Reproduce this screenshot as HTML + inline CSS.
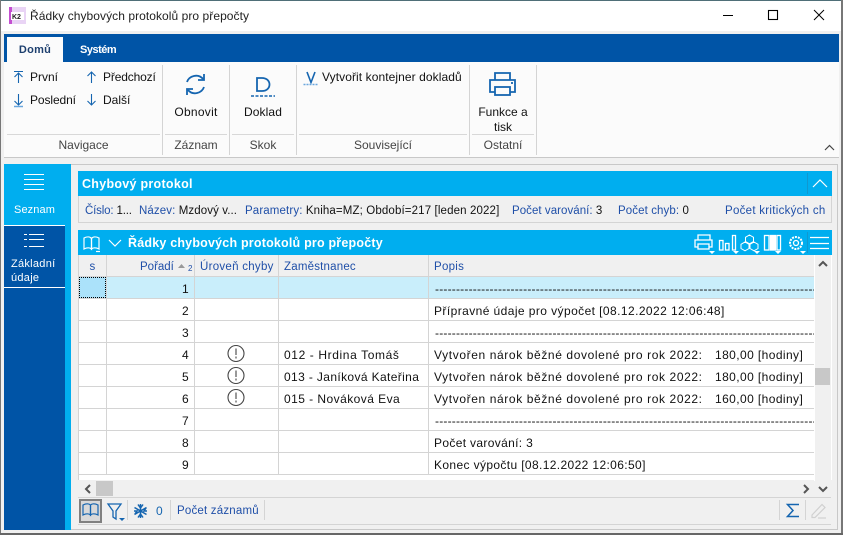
<!DOCTYPE html>
<html><head><meta charset="utf-8"><style>
html,body{margin:0;padding:0}
body{width:843px;height:535px;overflow:hidden;position:relative;background:#f0f0f0;font-family:"Liberation Sans",sans-serif;font-size:12px;letter-spacing:.28px;color:#111}
div,span.a{position:absolute}
.t{position:absolute;white-space:nowrap;line-height:16px}
.b{color:#1f4fa8}
.g{color:#444;letter-spacing:0}
.w{color:#fff}
.c{text-align:center}
.wb{color:#fff;font-weight:bold;font-size:12.5px}
svg{position:absolute;overflow:visible}
.sep{background:#d4d4d4;width:1px;top:65px;height:90px}
.gl{background:#d8d8d8;height:1px;top:134px}
.row{left:79px;width:735px;height:21px;background:#fff;border-bottom:1px solid #d4d4d4}
.v{background:#d4d4d4;width:1px}
.r{text-align:right;left:107px;width:82px}
.dash{left:435px;width:379px;overflow:hidden;letter-spacing:.2px}
.i{font-size:11.500px}
.n{letter-spacing:.61px}
.h{letter-spacing:.41px}
</style></head><body>
<div style="left:0;top:0;width:843px;height:1px;background:#4f6f78"></div>
<div style="left:0;top:0;width:1px;height:535px;background:#777"></div>
<div style="left:841px;top:0;width:2px;height:535px;background:#777"></div>
<div style="left:0;top:533px;width:843px;height:2px;background:#666"></div>
<div style="left:1px;top:1px;width:840px;height:30px;background:#fff"></div>
<svg style="left:9px;top:7px" width="17" height="17" viewBox="0 0 17 17"><rect width="17" height="17" fill="#e9d4f5"/><rect x="0" y="0" width="3" height="17" fill="#c44fd0"/><rect x="2" y="5" width="13" height="8" fill="#fff"/><text x="3" y="12" font-size="7" font-weight="bold" font-family="Liberation Sans" fill="#222" letter-spacing="0">K2</text></svg>
<span class="t" style="left:30px;top:8px;font-size:12px;letter-spacing:.06px;color:#222">Řádky chybových protokolů pro přepočty</span>
<svg style="left:720px;top:8px" width="110" height="16" fill="none" stroke="#000"><path d="M3 7.500H13"/><rect x="48.500" y="2.500" width="9" height="9" stroke-width="1.100"/><path d="M94 2L104 12M104 2L94 12"/></svg>

<div style="left:4px;top:34px;width:835px;height:28px;background:#0054a6"></div>
<div style="left:7px;top:37px;width:56px;height:25px;background:#fbfbfb"></div>
<span class="t c" style="left:7px;width:56px;top:42px;color:#1d3f6e;font-size:11px;font-weight:bold">Domů</span>
<span class="t w" style="left:80px;top:42px;font-size:11px;font-weight:bold;letter-spacing:-.5px">Systém</span>
<div style="left:4px;top:62px;width:835px;height:95px;background:#fbfbfb;border-bottom:1px solid #c8c8c8"></div>
<div class="sep" style="left:162px"></div><div class="sep" style="left:229px"></div><div class="sep" style="left:296px"></div><div class="sep" style="left:469px"></div><div class="sep" style="left:536px"></div>
<div class="gl" style="left:7px;width:153px"></div><div class="gl" style="left:165px;width:62px"></div><div class="gl" style="left:232px;width:62px"></div><div class="gl" style="left:299px;width:168px"></div><div class="gl" style="left:472px;width:62px"></div>
<svg style="left:13px;top:69px" width="90" height="40" fill="none" stroke="#1565b0" stroke-width="1.100"><path d="M1 2.500H10M5.500 4V14M1.500 8L5.500 4L9.500 8"/><path d="M5.500 25V36M1.500 32L5.500 36L9.500 32"/><path d="M1 37.500H10" stroke="#6aa6dc" stroke-width="1.500"/><path d="M78.500 3V14M74.500 7L78.500 3L82.500 7"/><path d="M78.500 25V36M74.500 32L78.500 36L82.500 32"/></svg>
<span class="t" style="left:30px;top:69px;letter-spacing:0">První</span>
<span class="t" style="left:103px;top:69px;letter-spacing:-.15px">Předchozí</span>
<span class="t" style="left:30px;top:92px;letter-spacing:-.1px">Poslední</span>
<span class="t" style="left:103px;top:92px;letter-spacing:0">Další</span>
<svg style="left:185px;top:73px" width="22" height="24" fill="none" stroke="#1565b0" stroke-width="1.800"><path d="M2 9C4 3 13 0 18 6"/><path d="M19 1V7H13"/><path d="M19 14C17 20 8 23 3 17"/><path d="M2 22V16H8"/></svg>
<span class="t c" style="left:163px;width:66px;top:104px">Obnovit</span>
<span class="t c" style="left:230px;width:66px;top:104px;letter-spacing:.1px">Doklad</span>
<svg style="left:250px;top:75px" width="26" height="23" fill="none" stroke="#1565b0"><path d="M7 3V16H12C22 16 22 3 12 3Z" stroke-width="1.800"/><path d="M1 21H25" stroke-width="1.500" stroke-dasharray="3 1.500"/></svg>
<svg style="left:303px;top:71px" width="16" height="16" fill="none" stroke="#1565b0"><path d="M4 1L8 11.500L12 1" stroke-width="1.600"/><path d="M0.500 13.500H15.500" stroke="#6aa6dc" stroke-width="1.500" stroke-dasharray="2 1"/></svg>
<span class="t" style="left:322px;top:69px;letter-spacing:.08px">Vytvořit kontejner dokladů</span>
<svg style="left:489px;top:72px" width="28" height="25" fill="none" stroke="#1565b0" stroke-width="1.800"><path d="M6 8V1H21V8"/><path d="M6 20H1V8H26V20H21"/><rect x="6" y="15" width="15" height="8"/><path d="M22 11H24"/></svg>
<span class="t c" style="left:470px;width:66px;top:105px;line-height:15px;white-space:normal;letter-spacing:0">Funkce a<br>tisk</span>
<span class="t c g" style="left:7px;width:153px;top:137px">Navigace</span>
<span class="t c g" style="left:165px;width:62px;top:137px">Záznam</span>
<span class="t c g" style="left:232px;width:62px;top:137px">Skok</span>
<span class="t c g" style="left:299px;width:168px;top:137px">Související</span>
<span class="t c g" style="left:472px;width:62px;top:137px">Ostatní</span>
<svg style="left:824px;top:144px" width="11" height="7" fill="none" stroke="#444" stroke-width="1.200"><path d="M1 6L5.500 1.500L10 6"/></svg>

<!-- left nav -->
<div style="left:4px;top:164px;width:61px;height:366px;background:#0054a6"></div>
<div style="left:65px;top:164px;width:6px;height:366px;background:#00aeef"></div>
<div style="left:4px;top:164px;width:61px;height:61px;background:#00aeef"></div>
<div style="left:4px;top:225px;width:61px;height:1px;background:#fff"></div>
<div style="left:4px;top:287px;width:61px;height:1px;background:#fff"></div>
<svg style="left:24px;top:174px" width="21" height="17" stroke="#fff"><path d="M0 .5H20M0 5.500H20M0 10.500H20M0 15.500H20"/></svg>
<span class="t w c" style="left:4px;width:61px;top:202px;font-size:11px;letter-spacing:.1px">Seznam</span>
<svg style="left:24px;top:234px" width="21" height="14" stroke="#fff"><path d="M5 .5H20M5 5.500H20M5 12.500H20M0 .5H3M0 5.500H3M0 12.500H3"/></svg>
<span class="t w" style="left:11px;top:257px;font-size:11px;line-height:14px">Základní<br>údaje</span>

<!-- panel -->
<div style="left:71px;top:164px;width:767px;height:1px;background:#c8c8c8"></div>
<div style="left:837px;top:164px;width:1px;height:366px;background:#c8c8c8"></div>
<div style="left:71px;top:529px;width:767px;height:1px;background:#c8c8c8"></div>
<div style="left:78px;top:171px;width:754px;height:25px;background:#00aeef"></div>
<div style="left:78px;top:196px;width:752px;height:26px;background:#f0f0f0;border:1px solid #d4d4d4;border-top:0"></div>
<span class="t wb" style="left:82px;top:176px">Chybový protokol</span>
<div style="left:807px;top:173px;width:1px;height:21px;background:#1098d0"></div>
<svg style="left:812px;top:179px" width="16" height="9" fill="none" stroke="#fff" stroke-width="1.200"><path d="M1 8L8 1L15 8"/></svg>
<span class="t i" style="left:85px;top:203px;letter-spacing:-.16px"><span class="b">Číslo:</span> 1...</span>
<span class="t i" style="left:139px;top:203px;letter-spacing:.1px"><span class="b">Název:</span> Mzdový v...</span>
<span class="t i" style="left:245px;top:203px;letter-spacing:.13px"><span class="b">Parametry:</span> Kniha=MZ; Období=217 [leden 2022]</span>
<span class="t i" style="left:512px;top:203px;letter-spacing:.05px"><span class="b">Počet varování:</span> 3</span>
<span class="t i" style="left:618px;top:203px;letter-spacing:.1px"><span class="b">Počet chyb:</span> 0</span>
<span class="t b i" style="left:725px;top:203px">Počet kritických ch</span>

<div style="left:78px;top:230px;width:754px;height:25px;background:#00aeef"></div>
<svg style="left:83px;top:236px" width="20" height="17" fill="none" stroke="#fff" stroke-width="1.200"><path d="M1 2C4 0.500 7 0.500 8.500 2.500V13C7 11.500 4 11.500 1 13Z"/><path d="M16 2C13 0.500 10 0.500 8.500 2.500V13C10 11.500 13 11.500 16 13Z"/><path d="M13 15.500H17"/></svg>
<svg style="left:108px;top:239px" width="14" height="8" fill="none" stroke="#fff" stroke-width="1.200"><path d="M1 1L7 7L13 1"/></svg>
<span class="t wb" style="left:128px;top:235px;letter-spacing:.2px">Řádky chybových protokolů pro přepočty</span>
<svg style="left:694px;top:234px" width="138" height="20" fill="none" stroke="#fff" stroke-width="1.300">
<path d="M4 6V1H16V6M4 13H1V6H18V13H15"/><rect x="4" y="10" width="11" height="5"/>
<rect x="25.500" y="6.500" width="3.500" height="9.500"/><rect x="31.500" y="9.500" width="3.500" height="6.500"/><rect x="38.500" y="1.500" width="3" height="14.500"/>
<path d="M55.500 1L59.500 3.300V7.500L55.500 9.800L51.500 7.500V3.300ZM51 8L55 10.300V14.500L51 16.800L47 14.500V10.300ZM60 8L64 10.300V14.500L60 16.800L56 14.500V10.300Z" stroke-width="1"/>
<rect x="70.500" y="1.500" width="4.500" height="14.500"/><rect x="76.500" y="1.500" width="5" height="14.500" fill="#fff"/><rect x="83" y="1.500" width="3.500" height="14.500"/>
<circle cx="102" cy="9" r="6" stroke-width="2" stroke-dasharray="2 1"/><circle cx="102" cy="9" r="2.500"/>
<path d="M116 3.500H135M116 9.500H135M116 14.500H135"/>
<path d="M15 17H21L18 20ZM39 17H45L42 20ZM60 17H66L63 20ZM81 17H87L84 20ZM106 17H112L109 20Z" fill="#fff" stroke="none"/></svg>
<div style="left:807px;top:232px;width:1px;height:21px;background:#1098d0"></div>

<!-- grid -->
<div style="left:78px;top:255px;width:753px;height:225px;background:#fff;border-left:1px solid #d4d4d4"></div>
<div style="left:79px;top:255px;width:735px;height:21px;background:#f0f0f0;border-bottom:1px solid #d4d4d4"></div>
<div class="row" style="top:277px;background:#c9eefb"></div>
<div style="left:79px;top:277px;width:27px;height:21px;background:#abe2fa;outline:1px dotted #000;outline-offset:-1px"></div>
<div class="row" style="top:299px"></div><div class="row" style="top:321px"></div><div class="row" style="top:343px"></div><div class="row" style="top:365px"></div><div class="row" style="top:387px"></div><div class="row" style="top:409px"></div><div class="row" style="top:431px"></div><div class="row" style="top:453px"></div>
<div class="v" style="left:106px;top:255px;height:219px"></div>
<div class="v" style="left:194px;top:255px;height:219px"></div>
<div class="v" style="left:278px;top:255px;height:219px"></div>
<div class="v" style="left:428px;top:255px;height:219px"></div>
<span class="t b c i" style="left:79px;width:27px;top:259px">s</span>
<span class="t b i" style="left:140px;top:259px;letter-spacing:0">Pořadí</span>
<svg style="left:177px;top:261px" width="16" height="11"><path d="M1 7L4.500 3L8 7Z" fill="#999"/><text x="11" y="10" font-size="8" fill="#1f4fa8" font-family="Liberation Sans">2</text></svg>
<span class="t b i" style="left:200px;top:259px">Úroveň chyby</span>
<span class="t b i" style="left:284px;top:259px;letter-spacing:.2px">Zaměstnanec</span>
<span class="t b i" style="left:434px;top:259px">Popis</span>

<span class="t r" style="top:281px">1</span><span class="t r" style="top:303px">2</span><span class="t r" style="top:325px">3</span><span class="t r" style="top:347px">4</span><span class="t r" style="top:369px">5</span><span class="t r" style="top:391px">6</span><span class="t r" style="top:413px">7</span><span class="t r" style="top:435px">8</span><span class="t r" style="top:457px">9</span>
<svg style="left:227px;top:345px" width="18" height="62" fill="none" stroke="#444" stroke-width="1.100"><circle cx="9" cy="8.500" r="8"/><path d="M9 3.500V10M9 11.500V13.500"/><circle cx="9" cy="30.500" r="8"/><path d="M9 25.500V32M9 33.500V35.500"/><circle cx="9" cy="52.500" r="8"/><path d="M9 47.500V54M9 55.500V57.500"/></svg>
<span class="t n" style="left:284px;top:347px">012 - Hrdina Tomáš</span>
<span class="t" style="left:284px;top:369px;letter-spacing:.37px">013 - Janíková Kateřina</span>
<span class="t" style="left:284px;top:391px;letter-spacing:.45px">015 - Nováková Eva</span>

<span class="t dash" style="top:281px">------------------------------------------------------------------------------------------------------------------------------------</span>
<span class="t dash" style="top:325px">------------------------------------------------------------------------------------------------------------------------------------</span>
<span class="t dash" style="top:413px">------------------------------------------------------------------------------------------------------------------------------------</span>
<span class="t" style="left:434px;top:303px;letter-spacing:.42px">Přípravné údaje pro výpočet [08.12.2022 12:06:48]</span>
<span class="t n" style="left:434px;top:347px">Vytvořen nárok běžné dovolené pro rok 2022:</span><span class="t h" style="left:715px;top:347px">180,00 [hodiny]</span>
<span class="t n" style="left:434px;top:369px">Vytvořen nárok běžné dovolené pro rok 2022:</span><span class="t h" style="left:715px;top:369px">180,00 [hodiny]</span>
<span class="t n" style="left:434px;top:391px">Vytvořen nárok běžné dovolené pro rok 2022:</span><span class="t h" style="left:715px;top:391px">160,00 [hodiny]</span>
<span class="t" style="left:434px;top:435px;letter-spacing:.34px">Počet varování: 3</span>
<span class="t" style="left:434px;top:457px;letter-spacing:.37px">Konec výpočtu [08.12.2022 12:06:50]</span>

<!-- scrollbars -->
<div style="left:815px;top:255px;width:16px;height:241px;background:#f0f0f0"></div>
<div style="left:814px;top:255px;width:1px;height:241px;background:#fff"></div>
<div style="left:815px;top:368px;width:15px;height:17px;background:#c8c8c8"></div>
<svg style="left:818px;top:260px" width="10" height="7" fill="none" stroke="#555" stroke-width="2"><path d="M1 6L5 2L9 6"/></svg>
<svg style="left:818px;top:486px" width="10" height="7" fill="none" stroke="#555" stroke-width="2"><path d="M1 1L5 5L9 1"/></svg>
<div style="left:79px;top:481px;width:736px;height:16px;background:#f0f0f0"></div>
<div style="left:96px;top:481px;width:17px;height:15px;background:#c8c8c8"></div>
<svg style="left:84px;top:484px" width="7" height="10" fill="none" stroke="#555" stroke-width="2"><path d="M6 1L2 5L6 9"/></svg>
<svg style="left:803px;top:484px" width="7" height="10" fill="none" stroke="#555" stroke-width="2"><path d="M1 1L5 5L1 9"/></svg>

<!-- bottom bar -->
<div style="left:78px;top:497px;width:753px;height:26px;background:#f0f0f0;border-top:1px solid #d4d4d4;border-bottom:1px solid #d4d4d4"></div>
<div style="left:79px;top:499px;width:19px;height:20px;border:2px solid #808080;background:#d9d9d9"></div>
<svg style="left:82px;top:503px" width="18" height="15" fill="none" stroke="#1565b0" stroke-width="1.200"><path d="M1 2C4 .5 7 .5 8.500 2V12C7 10.500 4 10.500 1 12Z"/><path d="M16 2C13 .5 10 .5 8.500 2V12C10 10.500 13 10.500 16 12Z"/></svg>
<svg style="left:107px;top:503px" width="19" height="19" fill="none" stroke="#1565b0" stroke-width="1.300"><path d="M1 1H14L9 8V16L6 14V8Z"/><path d="M12 15H18L15 18Z" fill="#1565b0" stroke="none"/></svg>
<div class="v" style="left:127px;top:500px;height:20px"></div>
<svg style="left:133px;top:503px" width="15" height="16" fill="none" stroke="#1565b0" stroke-width="1.500"><path d="M7.500 1V15M1.500 4.500L13.500 11.500M13.500 4.500L1.500 11.500M5 1.500L7.500 5L10 1.500M5 14.500L7.500 11L10 14.500M1 8H4L2 11M14 8H11L13 5"/></svg>
<span class="t b" style="left:156px;top:503px;color:#1565b0">0</span>
<div class="v" style="left:170px;top:500px;height:20px"></div>
<span class="t b i" style="left:177px;top:503px;letter-spacing:.2px">Počet záznamů</span>
<div class="v" style="left:264px;top:500px;height:20px"></div>
<div class="v" style="left:779px;top:500px;height:20px"></div>
<svg style="left:786px;top:503px" width="14" height="15" fill="none" stroke="#1565b0" stroke-width="1.500"><path d="M13 1.500H1.500L7 7.500L1.500 13.500H13"/></svg>
<div class="v" style="left:805px;top:500px;height:20px"></div>
<svg style="left:811px;top:503px" width="16" height="16" fill="none" stroke="#d0d0d0" stroke-width="1.200"><path d="M1 12L11 1.500L14 4.500L4 14.500H1Z"/><path d="M7 15H15"/></svg>
</body></html>
